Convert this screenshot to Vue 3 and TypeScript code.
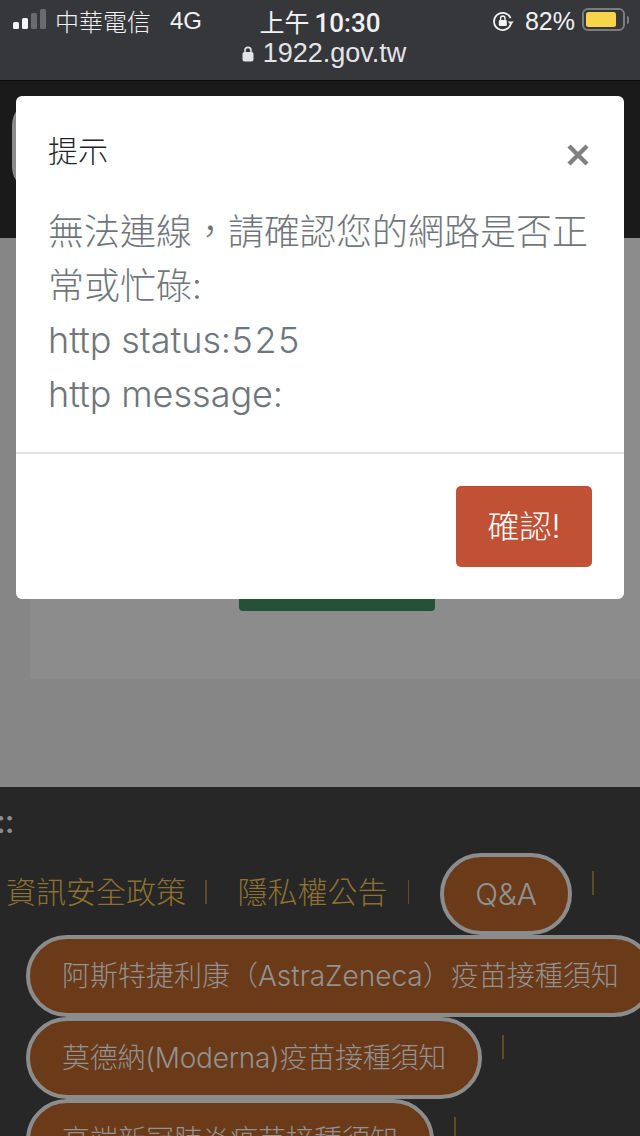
<script setup lang="ts">
const lp = '\uFF08'
const rp = '\uFF09'
const comma = '\uFF0C'
const links = [
  { text: `阿斯特捷利康${lp}AstraZeneca${rp}疫苗接種須知`, cls: 'az' },
  { text: '莫德納(Moderna)疫苗接種須知', cls: 'mo' },
  { text: '高端新冠肺炎疫苗接種須知', cls: 'ga' },
]
const message = `無法連線${comma}請確認您的網路是否正常或忙碌:`
</script>

<template>
  <div class="screen">
    <header class="browser">
      <div class="status">
        <div class="left">
          <span class="signal"><i class="on s1"></i><i class="on s2"></i><i class="s3"></i><i class="s4"></i></span>
          <span class="carrier">中華電信</span>
          <span class="net">4G</span>
        </div>
        <div class="time"><span class="am">上午</span>10:30</div>
        <div class="right">
          <svg class="rot" viewBox="0 0 22 22" width="22" height="22">
            <path d="M18.6 8.2A8.6 8.6 0 1 0 19 13.5" fill="none" stroke="#f4f4f6" stroke-width="1.8" />
            <path d="M15.8 11.5h6l-3 3.6z" fill="#f4f4f6" />
            <rect x="6.8" y="10" width="8" height="6" rx="1" fill="#f4f4f6" />
            <path d="M8.6 10V8.2a2.2 2.2 0 0 1 4.4 0V10" fill="none" stroke="#f4f4f6" stroke-width="1.4" />
          </svg>
          <span class="pct">82%</span>
          <span class="battery"><span class="level"></span></span>
          <span class="cap"></span>
        </div>
      </div>
      <div class="url">
        <svg class="lock" viewBox="0 0 12 16" width="12" height="16">
          <rect x="0.5" y="6" width="11" height="9.5" rx="2" fill="#e4e4e8" />
          <path d="M3 7V4.4a3 3 0 0 1 6 0V7" fill="none" stroke="#e4e4e8" stroke-width="1.6" />
        </svg>
        <span>1922.gov.tw</span>
      </div>
    </header>

    <div class="page-top"><div class="ghost"></div></div>

    <main class="page">
      <section class="card"><div class="green"></div></section>
    </main>

    <footer class="footer">
      <div class="colon">::</div>
      <div class="row first">
        <a class="plain sec">資訊安全政策</a><span class="sep"></span>
        <a class="plain priv">隱私權公告</a><span class="sep"></span>
        <a class="pill qa">Q&amp;A</a><span class="sep tall"></span>
      </div>
      <div v-for="l in links" :key="l.cls" class="row pillrow" :class="l.cls">
        <a class="pill">{{ l.text }}</a><span class="sep tall"></span>
      </div>
    </footer>

    <div class="modal">
      <div class="m-head">
        <span class="m-title">提示</span>
        <svg class="close" viewBox="0 0 24 24" width="24" height="24">
          <path d="M3 3 21 21M21 3 3 21" stroke="#808080" stroke-width="4.4" fill="none" />
        </svg>
      </div>
      <div class="m-body">
        {{ message }}<br />http status:525<br />http message:
      </div>
      <div class="m-foot"><button class="ok">確認!</button></div>
    </div>
  </div>
</template>

<style>
html, body { margin: 0; padding: 0; background: #272727; }
</style>

<style scoped>
.screen {
  position: relative;
  width: 640px;
  height: 1136px;
  overflow: hidden;
  display: flex;
  flex-direction: column;
  font-family: Inter, "Noto Sans CJK TC", sans-serif;
}
.browser {
  height: 80px;
  flex: none;
  background: #36373b;
  border-bottom: 1px solid #0b0b0b;
  color: #f1f1f3;
}
.status {
  height: 42px;
  display: grid;
  grid-template-columns: 1fr auto 1fr;
  align-items: center;
}
.left { display: flex; align-items: center; padding-left: 13px; }
.signal { display: flex; align-items: flex-end; gap: 3px; height: 20px; width: 33px; margin-top: -4px; flex: none; }
.signal i { width: 6px; background: #6a6b6e; border-radius: 1.5px; height: 20px; display: block; }
.signal .on { background: #f4f4f6; }
.signal .s1 { height: 7px; }
.signal .s2 { height: 11px; }
.signal .s3 { height: 16px; }
.carrier { font-size: 24px; margin-left: 9px; font-weight: 300; line-height: 30px; font-family: "Noto Sans CJK TC", sans-serif; }
.net { font-size: 24px; margin-left: 19px; font-family: "Liberation Sans", sans-serif; }
.time { font-size: 26px; font-weight: 500; font-family: Roboto, "Noto Sans CJK TC", sans-serif; }
.am { font-size: 25px; font-weight: 400; margin-right: 5px; font-family: "Noto Sans CJK TC", sans-serif; }
.right { display: flex; align-items: center; justify-content: flex-end; padding-right: 11px; }
.rot { margin-right: 11px; }
.pct { font-size: 25px; margin-right: 7px; font-family: "Liberation Sans", sans-serif; }
.battery {
  width: 43px; height: 23px; box-sizing: border-box; margin-top: -3px;
  border: 2px solid #7b7c80; border-radius: 6px; padding: 2px; display: block;
}
.level { display: block; height: 15px; background: #f7d449; border-radius: 2.5px; width: 86%; }
.cap { width: 2px; height: 8px; background: #7b7c80; margin: -3px 0 0 2px; border-radius: 0 2px 2px 0; }
.url {
  display: flex; align-items: center; justify-content: center; gap: 9px;
  font-size: 27px; color: #e4e4e8; height: 26px; margin-top: -2px; padding-left: 8px;
  font-family: "Liberation Sans", sans-serif;
}
.lock { margin-top: 2px; }
.page-top { height: 157px; flex: none; background: #1a1a1a; position: relative; }
.ghost {
  position: absolute; left: 12px; top: 20px; width: 60px; height: 90px;
  background: #8a8a8a; border-radius: 24px;
}
.page { height: 549px; flex: none; background: #868686; padding: 0 0 0 30px; box-sizing: border-box; }
.card { height: 441px; background: #8c8c8c; position: relative; }
.green {
  position: absolute; left: 209px; top: 340px; width: 196px; height: 33px;
  background: #245137; border-radius: 4px;
}
.footer { flex: 1; background: #272727; position: relative; overflow: hidden; }
.colon {
  color: #8c8c8c; font-size: 32px; line-height: 30px; height: 66px; padding-top: 20px;
  box-sizing: border-box; font-weight: 500; letter-spacing: -1px; margin-left: -4px;
}
.row { display: flex; align-items: flex-start; white-space: nowrap; }
.first { padding-left: 6px; height: 82px; }
.plain { color: #8e7130; font-size: 30px; font-weight: 300; line-height: 1; margin-top: 24px; }
.sep { display: block; width: 1.5px; height: 24px; background: #5f4c23; flex: none; }
.first .sec + .sep { margin: 27px 0 0 19px; }
.first .priv { margin-left: 31px; }
.first .priv + .sep { margin: 27px 31px 0 20px; }
.pill {
  display: block; box-sizing: border-box; height: 82px; line-height: 74px;
  border: 4px solid #8c8c8c; border-radius: 41px; background: #6b3a18;
  color: #929292; font-size: 28px; font-weight: 300; padding: 0 32px;
}
.qa { width: 132px; text-align: center; padding: 0; font-size: 30px; }
.tall { height: 24px; background: #5f4c23; }
.qa + .tall { margin: 18px 0 0 20px; }
.pillrow { padding-left: 26px; height: 82px; }
.mo .pill { letter-spacing: -0.25px; }
.mo .tall, .ga .tall { margin: 18px 0 0 20px; }
.modal {
  position: absolute; left: 16px; top: 96px; width: 608px; height: 503px;
  background: #fff; border-radius: 6px; box-sizing: border-box;
  display: flex; flex-direction: column;
}
.m-head { display: flex; justify-content: space-between; align-items: flex-start; height: 100px; padding: 34px 34px 0 32px; box-sizing: border-box; }
.m-title { font-size: 30px; color: #212529; font-weight: 300; line-height: 42px; }
.close { margin-top: 13px; }
.m-body { font-size: 36px; line-height: 54px; color: #6f767c; padding: 9px 32px 0; height: 258px; box-sizing: border-box; border-bottom: 2px solid #e3e3e3; font-weight: 300; flex: none; font-variant-numeric: tabular-nums; }
.m-foot { display: flex; justify-content: flex-end; padding: 32px 32px 0; }
.ok {
  width: 136px; height: 81px; border: none; border-radius: 5px; background: #c05135;
  color: #fff; font-size: 32px; font-weight: 300; font-family: inherit; padding: 0 0 6px;
}
</style>
